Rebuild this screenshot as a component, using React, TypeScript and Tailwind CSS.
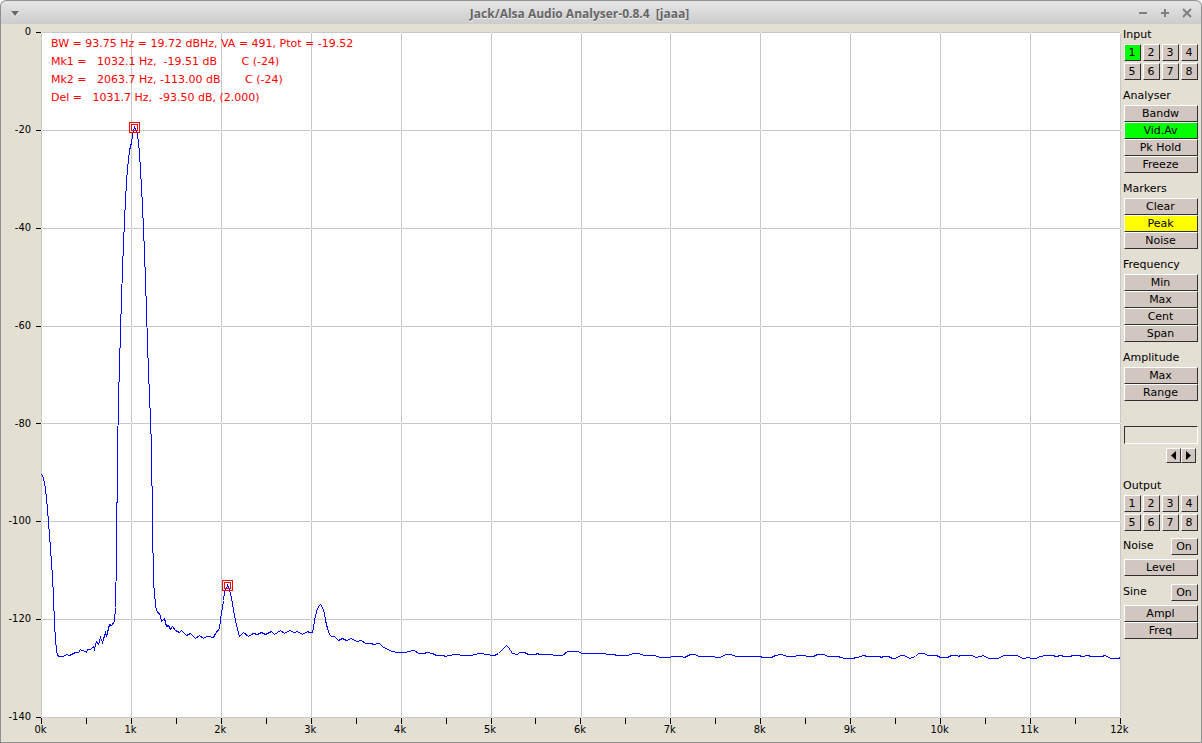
import { useState } from "react";

const yLabels = ["0", "-20", "-40", "-60", "-80", "-100", "-120", "-140"];
const xTicks = Array.from({ length: 25 }, (_, i) => (i % 2 === 0 ? `${i / 2}k` : ""));

// Plot space is 1080 x 686, origin at the top left of the grid
const gridX = [0, 90, 180, 270, 360, 450, 540, 629, 719, 809, 899, 989, 1079];
const gridY = [0, 98, 196, 294, 391, 489, 587, 685];

const trace = [
  "0,442 1,443 3,450 4,457 5,466 6,476 7,490 8,502 9,517 10,530 11,544 12,565 13,592 14,607 15,618 16,623 18,624 22,624 25,622 28,623 34,620 37,620 39,617 40,618 42,618 45,620 46,617 49,617 52,614 53,617 55,609 57,612 59,605 61,610 64,600 65,604 68,592 70,593 73,589 74,575",
  "75,525 76,420 77,368 78,333 79,299 80,266 81,237 82,211 83,188 84,167 85,150 86,136 87,127 88,118 90,110 91,103 92,98 93,95 94,97 96,102 97,110 98,121 99,137 100,155 101,174 102,196 103,220 104,248 105,278 106,311 107,339 108,363 109,387 110,415",
  "111,490 112,550 114,572 115,578 119,583 120,589 123,586 125,594 127,593 129,597 131,594 134,598 138,600 140,598 145,603 149,601 151,603 154,606 158,603 162,606 165,604 167,604 172,605 174,601 178,596 179,587 182,568 183,560 186,553 188,557 190,565 192,578 195,593 198,604",
  "202,600 207,604 212,601 216,602 220,600 224,602 230,599 233,602 239,598 243,601 248,598 253,600 256,599 261,602 266,599 268,600 271,600 272,595 273,588 275,579 277,574 279,572 281,575 283,581 284,588 286,596 288,602 290,604 293,604 297,608 301,606 305,608 310,606 315,609 320,608",
  "324,611 330,611 332,612 338,611 342,615 351,619 356,620 359,620 364,620 367,619 373,618 377,621 382,621 386,620 391,621 395,623 402,623 404,624 407,623 415,622 422,623 430,623 437,621 447,622 450,623 453,623 457,621 460,618 465,613 467,615 471,621 476,622 478,620 483,620 487,622",
  "494,622 496,621 498,622 511,622 512,623 521,623 526,619 536,619 541,621 564,621 565,622 573,622 575,623 586,623 592,621 597,621 603,623 613,623 619,625 629,625 630,624 640,624 643,625 649,622 654,622 657,624 669,624 678,625 685,622 689,622 695,624 719,624 721,625 730,625 734,623",
  "740,622 746,624 753,624 756,623 764,623 765,624 772,624 776,622 782,622 787,624 797,624 799,625 804,626 810,626 816,625 822,623 826,624 838,624 840,625 842,624 847,624 851,626 854,626 859,623 863,623 868,626 874,624 877,621 882,621 887,623 895,623 899,625 906,625 910,623 916,623",
  "917,624 919,623 930,623 935,625 942,623 947,626 956,626 963,623 975,623 982,626 987,625 990,626 994,626 999,624 1005,623 1011,623 1015,624 1019,623 1023,624 1029,624 1031,623 1037,623 1041,624 1046,623 1050,624 1061,624 1063,623 1070,626 1077,626 1079,625",
].join(" ");

function Chart() {
  return (
    <svg
      viewBox="0 0 1080 686"
      preserveAspectRatio="none"
      shapeRendering="crispEdges"
      className="absolute inset-0 w-full h-full bg-white"
    >
      {gridX.map((x) => (
        <rect key={x} x={x} y={0} width={1} height={686} fill="#c8c8c8" />
      ))}
      {gridY.map((y) => (
        <rect key={y} x={0} y={y} width={1080} height={1} fill="#c8c8c8" />
      ))}
      {gridX.map((x) =>
        gridY.map((y) => <rect key={`${x}-${y}`} x={x} y={y} width={1} height={1} fill="#f4f4f4" />)
      )}
      <polyline points={trace} transform="translate(0.5 0.5)" fill="none" stroke="#0000ff" strokeWidth={1} />
      {/* Markers */}
      <g fill="none" stroke="#ff0000">
        <rect x={88.5} y={90.5} width={10} height={10} />
        <rect x={90.5} y={92.5} width={6} height={6} />
        <rect x={181.5} y={548.5} width={10} height={10} />
        <rect x={183.5} y={550.5} width={6} height={6} />
      </g>
    </svg>
  );
}

type PanelButtonProps = {
  label: string;
  tone?: string;
  onClick?: () => void;
};

function PanelButton({ label, tone = "bg-[#d1c7c0]", onClick }: PanelButtonProps) {
  return (
    <button
      onClick={onClick}
      className={`flex h-[17px] w-full items-center justify-center border border-t-white border-l-white border-r-[#303030] border-b-[#303030] pr-px leading-none ${tone}`}
    >
      {label}
    </button>
  );
}

function ChannelGrid({ initial }: { initial: number }) {
  const [channel, setChannel] = useState(initial);
  return (
    <div className="grid grid-cols-4 gap-[2px]">
      {[1, 2, 3, 4, 5, 6, 7, 8].map((n) => (
        <PanelButton
          key={n}
          label={String(n)}
          tone={n === channel ? "bg-[#00ff00]" : undefined}
          onClick={() => setChannel(n)}
        />
      ))}
    </div>
  );
}

function Heading({ children }: { children: string }) {
  return <h2 className="-ml-px h-[18px] leading-[18px]">{children}</h2>;
}

function SwitchRow({ label }: { label: string }) {
  return (
    <div className="mb-1 flex h-[17px] justify-between">
      <h2 className="-ml-px leading-4">{label}</h2>
      <div className="w-[27px]">
        <PanelButton label="On" />
      </div>
    </div>
  );
}

export default function App() {
  return (
    <div className="flex min-h-screen flex-col rounded-t-md border border-t-0 border-[#8f8f8f] bg-[#e3dfd3] font-['DejaVu_Sans',sans-serif] text-[11px] text-black">
      {/* Title bar */}
      <header className="flex h-6 items-center rounded-t-md border-t border-[#8f8f8f] bg-linear-to-b from-[#e6e6e6] to-[#cccccc] pr-[9px] pl-2">
        <button aria-label="Window menu" className="pt-px">
          <svg width="12" height="8" viewBox="0 0 12 8">
            <path d="M2 3h8L6 8z" fill="#f4f4f4" />
            <path d="M2 2h8L6 7z" fill="#6a6a6a" />
          </svg>
        </button>
        <h1 className="flex-1 pt-[2px] text-center font-['Open_Sans',sans-serif] text-xs font-bold whitespace-pre text-[#666666] text-shadow-[0_1px_0_#f0f0f0]">
          Jack/Alsa Audio Analyser-0.8.4  [jaaa]
        </h1>
        <div className="flex items-center gap-3 text-[#808080]">
          <button aria-label="Minimize">
            <svg width="10" height="10" viewBox="0 0 10 10" stroke="currentColor" strokeWidth="2">
              <path d="M1 5h8" />
            </svg>
          </button>
          <button aria-label="Maximize">
            <svg width="10" height="10" viewBox="0 0 10 10" stroke="currentColor" strokeWidth="2">
              <path d="M1 5h8M5 1v8" />
            </svg>
          </button>
          <button aria-label="Close">
            <svg width="10" height="10" viewBox="0 0 10 10" stroke="currentColor" strokeWidth="2">
              <path d="M1 1l8 8M9 1l-8 8" />
            </svg>
          </button>
        </div>
      </header>

      <main className="flex flex-1">
        {/* Level axis */}
        <div className="flex w-10 flex-col justify-between pb-4">
          {yLabels.map((label) => (
            <div key={label} className="flex h-[17px] items-center justify-end gap-[5px]">
              <span className="font-stretch-condensed">{label}</span>
              <span className="h-px w-[5px] bg-black" />
            </div>
          ))}
        </div>

        <div className="flex flex-1 flex-col pt-2">
          <div className="relative flex-1">
            <Chart />
            <div className="absolute top-[3px] left-[10px] leading-[18px] whitespace-pre text-[#ff0000]">
              <p>BW = 93.75 Hz = 19.72 dBHz, VA = 491, Ptot = -19.52</p>
              <p>Mk1 =   1032.1 Hz,  -19.51 dB       C (-24)</p>
              <p>Mk2 =   2063.7 Hz, -113.00 dB       C (-24)</p>
              <p>Del =   1031.7 Hz,  -93.50 dB, (2.000)</p>
            </div>
          </div>
          {/* Frequency axis */}
          <div className="flex h-6 justify-between">
            {xTicks.map((label, i) => (
              <div key={i} className="flex w-px flex-col items-center">
                <span className="h-[6px] w-px bg-black" />
                <span className="pr-[2px] leading-[11px] font-stretch-condensed">{label}</span>
              </div>
            ))}
          </div>
        </div>

        {/* Controls */}
        <aside className="flex w-20 flex-col gap-[7px] pt-[2px] pr-[3px] pl-[3px]">
          <section>
            <Heading>Input</Heading>
            <ChannelGrid initial={1} />
          </section>
          <section>
            <Heading>Analyser</Heading>
            <PanelButton label="Bandw" />
            <PanelButton label="Vid.Av" tone="bg-[#00ff00]" />
            <PanelButton label="Pk Hold" />
            <PanelButton label="Freeze" />
          </section>
          <section>
            <Heading>Markers</Heading>
            <PanelButton label="Clear" />
            <PanelButton label="Peak" tone="bg-[#ffff00]" />
            <PanelButton label="Noise" />
          </section>
          <section>
            <Heading>Frequency</Heading>
            <PanelButton label="Min" />
            <PanelButton label="Max" />
            <PanelButton label="Cent" />
            <PanelButton label="Span" />
          </section>
          <section>
            <Heading>Amplitude</Heading>
            <PanelButton label="Max" />
            <PanelButton label="Range" />
          </section>
          <section className="pt-[18px] pb-[7px]">
            <input
              aria-label="Value"
              className="block h-[18px] w-full border border-t-[#303030] border-l-[#303030] border-r-white border-b-white px-1 outline-none"
            />
            <div className="mt-1 flex justify-end pr-[2px]">
              <button
                aria-label="Decrease"
                className="flex size-[15px] items-center justify-center border border-t-white border-l-white border-r-[#303030] border-b-[#303030] bg-[#d1c7c0]"
              >
                <svg width="5" height="9" viewBox="0 0 5 9">
                  <path d="M5 0v9L0 4.5z" />
                </svg>
              </button>
              <button
                aria-label="Increase"
                className="flex size-[15px] items-center justify-center border border-t-white border-l-white border-r-[#303030] border-b-[#303030] bg-[#d1c7c0]"
              >
                <svg width="5" height="9" viewBox="0 0 5 9">
                  <path d="M0 0v9l5-4.5z" />
                </svg>
              </button>
            </div>
          </section>
          <section>
            <Heading>Output</Heading>
            <ChannelGrid initial={0} />
          </section>
          <section>
            <SwitchRow label="Noise" />
            <PanelButton label="Level" />
          </section>
          <section className="pt-px">
            <SwitchRow label="Sine" />
            <PanelButton label="Ampl" />
            <PanelButton label="Freq" />
          </section>
        </aside>
      </main>
    </div>
  );
}
